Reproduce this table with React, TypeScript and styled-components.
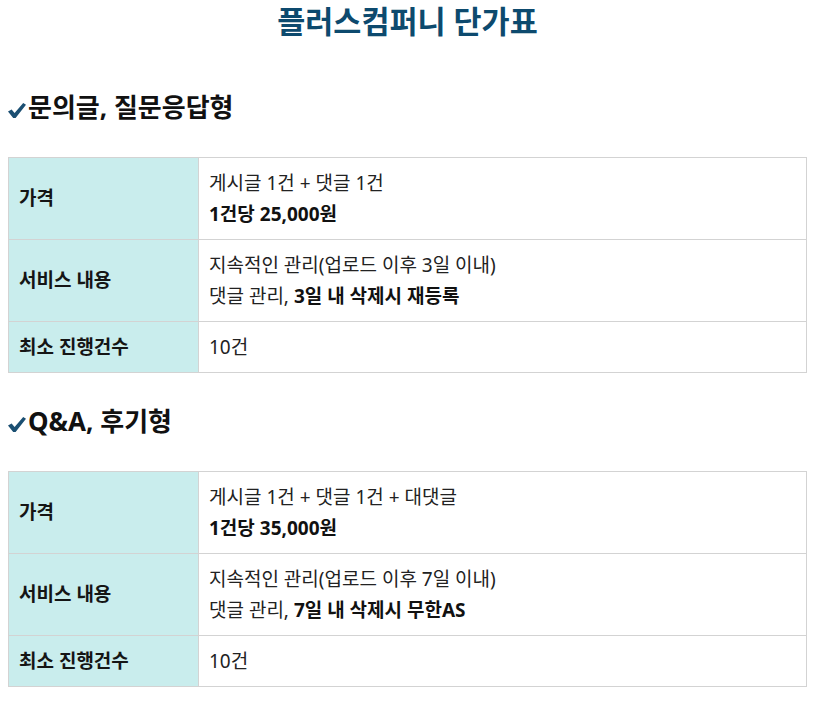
import React from "react";
import styled, { createGlobalStyle } from "styled-components";

const Global = createGlobalStyle`
  html, body { margin: 0; padding: 0; background: #fff; }
  body {
    font-family: "Noto Sans", "Noto Sans CJK KR", sans-serif;
    color: #222;
  }
`;

const Page = styled.div`
  padding: 0 8px;
`;

const Title = styled.h1`
  margin: 2px 0 0;
  text-align: center;
  font-size: 30.5px;
  line-height: 39px;
  font-weight: 700;
  color: #0d4a6e;
`;

const Heading = styled.h3<{ $first?: boolean }>`
  margin: ${(p) => (p.$first ? "50px" : "32px")} 0 0;
  font-size: 26px;
  line-height: 33px;
  font-weight: 700;
  color: #111;
  display: flex;
  align-items: center;
`;

const CheckIcon = styled.svg`
  width: 18px;
  height: 15px;
  margin: 5px 2px 0 0;
  flex: none;
`;

const Grid = styled.div`
  margin-top: 33px;
  display: grid;
  grid-template-columns: 190px 1fr;
  border-top: 1px solid #d3d3d3;
  border-left: 1px solid #d3d3d3;
`;

const Cell = styled.div<{ $label?: boolean }>`
  box-sizing: border-box;
  border-right: 1px solid #d3d3d3;
  border-bottom: 1px solid #d3d3d3;
  padding: 9.5px 10px;
  font-size: 19px;
  line-height: 31px;
  display: flex;
  flex-direction: column;
  justify-content: center;
  background: ${(p) => (p.$label ? "#c9eded" : "#fff")};
  font-weight: ${(p) => (p.$label ? 700 : 400)};
  color: ${(p) => (p.$label ? "#151515" : "#222")};
`;

const B = styled.b`
  font-weight: 700;
  color: #111;
`;

type Row = { label: string; lines: React.ReactNode[] };

const sections: { title: string; first?: boolean; rows: Row[] }[] = [
  {
    title: "문의글, 질문응답형",
    first: true,
    rows: [
      { label: "가격", lines: ["게시글 1건 + 댓글 1건", <B key="b">1건당 25,000원</B>] },
      {
        label: "서비스 내용",
        lines: [
          "지속적인 관리(업로드 이후 3일 이내)",
          <span key="s">
            댓글 관리, <B>3일 내 삭제시 재등록</B>
          </span>,
        ],
      },
      { label: "최소 진행건수", lines: ["10건"] },
    ],
  },
  {
    title: "Q&A, 후기형",
    rows: [
      { label: "가격", lines: ["게시글 1건 + 댓글 1건 + 대댓글", <B key="b">1건당 35,000원</B>] },
      {
        label: "서비스 내용",
        lines: [
          "지속적인 관리(업로드 이후 7일 이내)",
          <span key="s">
            댓글 관리, <B>7일 내 삭제시 무한AS</B>
          </span>,
        ],
      },
      { label: "최소 진행건수", lines: ["10건"] },
    ],
  },
];

function Check() {
  return (
    <CheckIcon viewBox="0 0 18 15" aria-hidden>
      <path d="M0 8.6 L3.6 6.4 L6.6 10 L15.2 0 L18 1.8 L7.6 15 L5.2 15 Z" fill="#1b4f72" />
    </CheckIcon>
  );
}

export default function App() {
  return (
    <Page>
      <Global />
      <Title>플러스컴퍼니 단가표</Title>
      {sections.map((s) => (
        <section key={s.title}>
          <Heading $first={s.first}>
            <Check />
            {s.title}
          </Heading>
          <Grid>
            {s.rows.map((r) => (
              <React.Fragment key={r.label}>
                <Cell $label>{r.label}</Cell>
                <Cell>
                  {r.lines.map((l, i) => (
                    <div key={i}>{l}</div>
                  ))}
                </Cell>
              </React.Fragment>
            ))}
          </Grid>
        </section>
      ))}
    </Page>
  );
}
